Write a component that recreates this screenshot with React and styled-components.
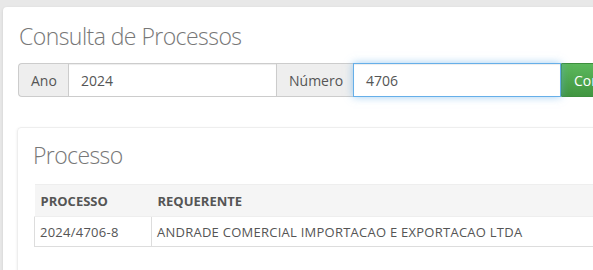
import React from 'react'
import styled, { createGlobalStyle } from 'styled-components'

const GlobalStyle = createGlobalStyle`
    html, body {
        margin: 0;
        padding: 0;
        background: #e8e8e8;
        font-family: "Open Sans", "Liberation Sans", sans-serif;
        color: #555;
        overflow: hidden;
    }
    * { box-sizing: border-box; }
`

const Page = styled.div`
    width: 593px;
    height: 270px;
    overflow: hidden;
    padding: 7px 0 0 3px;
`

const Card = styled.div`
    width: 720px;
    min-height: 300px;
    background: #fff;
    border-radius: 4px;
    box-shadow: 0 1px 3px rgba(0, 0, 0, 0.12);
    padding: 16px 15px 20px 15px;
`

const Title = styled.h2`
    margin: 0 0 14px 1px;
    font-size: 23px;
    font-weight: 300;
    letter-spacing: -0.55px;
    line-height: 26px;
    color: #777;
`

const InputGroup = styled.div`
    display: flex;
    height: 34px;
    font-size: 14px;
`

const Addon = styled.span`
    display: flex;
    align-items: center;
    padding: 0 12px;
    background: #eee;
    border: 1px solid #ccc;
    border-right: 0;
    border-radius: ${p => (p.first ? '4px 0 0 4px' : '0')};
    color: #555;
    width: ${p => p.w}px;
`

const Field = styled.div`
    display: flex;
    align-items: center;
    width: ${p => p.w}px;
    padding: 0 12px;
    border: 1px solid ${p => (p.focused ? '#66afe9' : '#ccc')};
    border-right: ${p => (p.focused ? '1px solid #66afe9' : '0')};
    background: #fff;
    color: #555;
    box-shadow: ${p => (p.focused
        ? 'inset 0 1px 1px rgba(0,0,0,.075), 0 0 8px rgba(102,175,233,.6)'
        : 'inset 0 1px 1px rgba(0,0,0,.075)')};
    position: relative;
    z-index: ${p => (p.focused ? 2 : 0)};
`

const Button = styled.button`
    height: 34px;
    padding: 0 12px;
    border: 1px solid #3e8f3e;
    border-radius: 0 4px 4px 0;
    background: linear-gradient(to bottom, #5cb85c 0%, #419641 100%);
    color: #fff;
    font-family: inherit;
    font-size: 14px;
`

const Panel = styled.div`
    margin-top: 30px;
    margin-left: -1px;
    border: 1px solid #eee;
    border-radius: 4px;
    box-shadow: 0 1px 3px rgba(0, 0, 0, 0.08);
    padding: 14px 16px 40px 16px;
`

const PanelTitle = styled.h3`
    margin: 0 0 16px -1px;
    font-size: 23px;
    font-weight: 300;
    letter-spacing: -0.6px;
    line-height: 26px;
    color: #777;
`

const Table = styled.table`
    border-collapse: collapse;
    width: 640px;
    font-size: 13px;
`

const Th = styled.th`
    height: 32px;
    padding: 0 6px;
    text-align: left;
    font-weight: 700;
    color: #555;
    background: #f5f5f5;
    border: 1px solid #eee;
    border-left: 0;
    border-right: 0;
    width: ${p => (p.w ? `${p.w}px` : 'auto')};
`

const Td = styled.td`
    height: 30px;
    padding: 0 5px;
    color: #555;
    letter-spacing: 0.25px;
    border: 1px solid #ddd;
    border-top: 0;
    white-space: nowrap;
`

const App = () => {
    return (
        <Page>
            <GlobalStyle />
            <Card>
                <Title>Consulta de Processos</Title>
                <InputGroup>
                    <Addon first w={50}>Ano</Addon>
                    <Field w={208}>2024</Field>
                    <Addon w={77}>Número</Addon>
                    <Field focused w={208}>4706</Field>
                    <Button>Consultar</Button>
                </InputGroup>
                <Panel>
                    <PanelTitle>Processo</PanelTitle>
                    <Table>
                        <thead>
                            <tr>
                                <Th w={117}>PROCESSO</Th>
                                <Th>REQUERENTE</Th>
                            </tr>
                        </thead>
                        <tbody>
                            <tr>
                                <Td>2024/4706-8</Td>
                                <Td>ANDRADE COMERCIAL IMPORTACAO E EXPORTACAO LTDA</Td>
                            </tr>
                        </tbody>
                    </Table>
                </Panel>
            </Card>
        </Page>
    )
}

export default App
